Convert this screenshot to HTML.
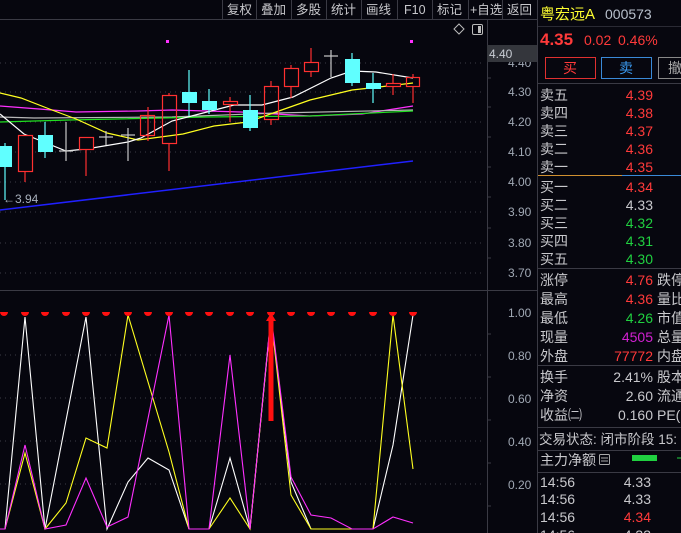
<!DOCTYPE html>
<html><head><meta charset="utf-8"><style>
html,body{margin:0;padding:0;background:#06060e;width:681px;height:533px;overflow:hidden}
svg{display:block}
text{font-family:"Liberation Sans","Noto Sans CJK SC",sans-serif}
</style></head><body>
<svg width="681" height="533" viewBox="0 0 681 533" xmlns="http://www.w3.org/2000/svg">
<rect width="681" height="533" fill="#06060e"/>
<rect x="0" y="0" width="537" height="19" fill="#06060e"/>
<line x1="0" y1="19.5" x2="537" y2="19.5" stroke="#3a3a44"/>
<g stroke="#3a3a44">
<line x1="222.5" y1="0" x2="222.5" y2="19"/><line x1="256.5" y1="0" x2="256.5" y2="19"/><line x1="291.5" y1="0" x2="291.5" y2="19"/><line x1="326.5" y1="0" x2="326.5" y2="19"/><line x1="361.5" y1="0" x2="361.5" y2="19"/><line x1="397.5" y1="0" x2="397.5" y2="19"/><line x1="432.5" y1="0" x2="432.5" y2="19"/><line x1="468.5" y1="0" x2="468.5" y2="19"/><line x1="502.5" y1="0" x2="502.5" y2="19"/>
</g>
<g fill="#c8c8cc" font-size="12.5">
<text x="227" y="14">复权</text><text x="261" y="14">叠加</text><text x="296" y="14">多股</text><text x="331" y="14">统计</text><text x="366" y="14">画线</text><text x="404" y="14">F10</text><text x="437" y="14">标记</text><text x="470" y="14">+自选</text><text x="507" y="14">返回</text>
</g>
<path d="M459 24 L464 29 L459 34 L454 29 Z" fill="none" stroke="#bbb" stroke-width="1"/>
<rect x="472.5" y="24.5" width="10" height="10" rx="1.5" fill="none" stroke="#bbb"/>
<rect x="478" y="26" width="3" height="7" fill="#bbb"/>
<line x1="487.5" y1="20" x2="487.5" y2="533" stroke="#3a3a44"/>
<line x1="0" y1="290.5" x2="537" y2="290.5" stroke="#3a3a44"/>
<line x1="537.5" y1="0" x2="537.5" y2="533" stroke="#3a3a44"/>
<g stroke="#3c3c46" stroke-dasharray="1 4">
<line x1="0" y1="63" x2="485" y2="63"/><line x1="0" y1="92" x2="485" y2="92"/><line x1="0" y1="122" x2="485" y2="122"/><line x1="0" y1="152" x2="485" y2="152"/><line x1="0" y1="182" x2="485" y2="182"/><line x1="0" y1="212" x2="485" y2="212"/><line x1="0" y1="243" x2="485" y2="243"/><line x1="0" y1="273" x2="485" y2="273"/>
<line x1="0" y1="355" x2="485" y2="355"/><line x1="0" y1="398" x2="485" y2="398"/><line x1="0" y1="441" x2="485" y2="441"/><line x1="0" y1="484" x2="485" y2="484"/>
</g>
<g stroke="#3a3a44">
<line x1="487" y1="78" x2="491" y2="78"/><line x1="487" y1="107" x2="491" y2="107"/><line x1="487" y1="137" x2="491" y2="137"/><line x1="487" y1="167" x2="491" y2="167"/><line x1="487" y1="197" x2="491" y2="197"/><line x1="487" y1="228" x2="491" y2="228"/><line x1="487" y1="258" x2="491" y2="258"/>
<line x1="487" y1="334" x2="491" y2="334"/><line x1="487" y1="377" x2="491" y2="377"/><line x1="487" y1="420" x2="491" y2="420"/><line x1="487" y1="463" x2="491" y2="463"/><line x1="487" y1="506" x2="491" y2="506"/>
</g>
<g fill="#a0a8b4" font-size="12">
<text x="508" y="67">4.40</text><text x="508" y="96">4.30</text><text x="508" y="126">4.20</text><text x="508" y="156">4.10</text><text x="508" y="186">4.00</text><text x="508" y="216">3.90</text><text x="508" y="247">3.80</text><text x="508" y="277">3.70</text>
<text x="508" y="317">1.00</text><text x="508" y="360">0.80</text><text x="508" y="403">0.60</text><text x="508" y="446">0.40</text><text x="508" y="489">0.20</text>
</g>
<rect x="487" y="45" width="50" height="17" fill="#34363c"/>
<text x="489" y="58" fill="#c8ccd4" font-size="12">4.40</text>
<polyline fill="none" stroke="#ff30ff" stroke-width="1.2" points="0,106 52,110 76,112 138,111 172,110 241,112 310,116 362,114 413,106"/>
<polyline fill="none" stroke="#b8b8b8" stroke-width="1.2" points="0,117 34,118 172,117 276,113 413,110"/>
<polyline fill="none" stroke="#20e020" stroke-width="1.2" points="0,122 69,120 207,117 310,116 413,111"/>
<polyline fill="none" stroke="#2020ff" stroke-width="1.5" points="0,210 413,161"/>
<polyline fill="none" stroke="#ffff20" stroke-width="1.2" points="0,93 21,98 52,110 76,119 107,133 138,140 183,134 214,126 248,122 276,112 310,100 352,90 379,87 413,83"/>
<polyline fill="none" stroke="#ffffff" stroke-width="1.2" points="0,114 24,134 66,151 86,149 128,142 141,138 172,121 207,112 234,105 262,105 293,97 331,78 352,71 376,72 413,78"/>
<g stroke-width="1.2">
<line x1="5" y1="143" x2="5" y2="200" stroke="#60ffff"/><rect x="0" y="146" width="12" height="21" fill="#60ffff"/>
<line x1="25" y1="171" x2="25" y2="182" stroke="#ff3030"/><rect x="18.5" y="135.5" width="14" height="36" fill="#06060e" stroke="#ff3030"/>
<line x1="45" y1="122" x2="45" y2="158" stroke="#60ffff"/><rect x="38" y="135" width="15" height="17" fill="#60ffff"/>
<line x1="66" y1="122" x2="66" y2="161" stroke="#c8c8c8"/><line x1="59" y1="151" x2="73" y2="151" stroke="#c8c8c8"/>
<line x1="86" y1="149" x2="86" y2="176" stroke="#ff3030"/><rect x="79.5" y="137.5" width="14" height="12" fill="#06060e" stroke="#ff3030"/>
<line x1="106" y1="131" x2="106" y2="145" stroke="#c8c8c8"/><line x1="99" y1="137" x2="113" y2="137" stroke="#c8c8c8"/>
<line x1="128" y1="128" x2="128" y2="161" stroke="#c8c8c8"/><line x1="121" y1="135" x2="135" y2="135" stroke="#c8c8c8"/>
<line x1="148" y1="107" x2="148" y2="141" stroke="#ff3030"/><rect x="140.5" y="115.5" width="14" height="20" fill="none" stroke="#ff3030"/>
<line x1="169" y1="93" x2="169" y2="95" stroke="#ff3030"/><line x1="169" y1="143" x2="169" y2="171" stroke="#ff3030"/><rect x="162.5" y="95.5" width="14" height="48" fill="none" stroke="#ff3030"/>
<line x1="189" y1="70" x2="189" y2="116" stroke="#60ffff"/><rect x="182" y="92" width="15" height="11" fill="#60ffff"/>
<line x1="209" y1="89" x2="209" y2="114" stroke="#60ffff"/><rect x="202" y="101" width="15" height="9" fill="#60ffff"/>
<line x1="230" y1="97" x2="230" y2="122" stroke="#ff3030"/><rect x="223.5" y="101.5" width="14" height="3" fill="#06060e" stroke="#ff3030"/>
<line x1="250" y1="95" x2="250" y2="131" stroke="#60ffff"/><rect x="243" y="110" width="15" height="18" fill="#60ffff"/>
<line x1="271" y1="81" x2="271" y2="86" stroke="#ff3030"/><line x1="271" y1="119" x2="271" y2="125" stroke="#ff3030"/><rect x="264.5" y="86.5" width="14" height="33" fill="none" stroke="#ff3030"/>
<line x1="291" y1="65" x2="291" y2="68" stroke="#ff3030"/><line x1="291" y1="86" x2="291" y2="98" stroke="#ff3030"/><rect x="284.5" y="68.5" width="14" height="18" fill="#06060e" stroke="#ff3030"/>
<line x1="311" y1="48" x2="311" y2="62" stroke="#ff3030"/><line x1="311" y1="71" x2="311" y2="77" stroke="#ff3030"/><rect x="304.5" y="62.5" width="14" height="9" fill="#06060e" stroke="#ff3030"/>
<line x1="331" y1="50" x2="331" y2="77" stroke="#c8c8c8"/><line x1="324" y1="56" x2="338" y2="56" stroke="#c8c8c8"/>
<line x1="352" y1="53" x2="352" y2="86" stroke="#60ffff"/><rect x="345" y="59" width="15" height="24" fill="#60ffff"/>
<line x1="373" y1="73" x2="373" y2="103" stroke="#60ffff"/><rect x="366" y="83" width="15" height="6" fill="#60ffff"/>
<line x1="393" y1="74" x2="393" y2="83" stroke="#ff3030"/><line x1="393" y1="86" x2="393" y2="95" stroke="#ff3030"/><rect x="386.5" y="83.5" width="14" height="3" fill="#06060e" stroke="#ff3030"/>
<line x1="413" y1="74" x2="413" y2="77" stroke="#ff3030"/><line x1="413" y1="86" x2="413" y2="103" stroke="#ff3030"/><rect x="406.5" y="77.5" width="13" height="9" fill="none" stroke="#ff3030"/>
</g>
<rect x="166" y="40" width="3" height="3" fill="#ff30ff"/><rect x="410" y="40" width="3" height="3" fill="#ff30ff"/>
<text x="3" y="203" fill="#a8b0bc" font-size="12">←3.94</text>
<polyline fill="none" stroke="#ffffff" stroke-width="1.1" points="0,529 5,529 25,317 45,529 86,317 107,529 128,482 148,458 169,470 189,529 209,529 230,458 250,529 271,317 291,482 311,529 373,529 393,445 413,315"/>
<polyline fill="none" stroke="#ffff20" stroke-width="1.1" points="0,529 5,529 25,453 45,529 66,503 86,438 107,448 128,315 169,452 189,529 209,529 230,498 250,529 271,317 291,495 311,529 373,529 393,315 413,469"/>
<polyline fill="none" stroke="#ff30ff" stroke-width="1.1" points="0,529 5,529 25,445 45,529 66,525 86,478 107,527 128,517 169,315 189,529 209,529 230,355 250,529 271,315 291,477 311,515 331,518 352,529 373,529 393,517 413,523"/>
<g fill="#ff1010">
<path d="M0 312 h8 a4 4 0 0 1 -8 0Z"/>
<path d="M21 312 h8 a4 4 0 0 1 -8 0Z"/><path d="M41 312 h8 a4 4 0 0 1 -8 0Z"/><path d="M62 312 h8 a4 4 0 0 1 -8 0Z"/><path d="M82 312 h8 a4 4 0 0 1 -8 0Z"/><path d="M102 312 h8 a4 4 0 0 1 -8 0Z"/><path d="M124 312 h8 a4 4 0 0 1 -8 0Z"/><path d="M144 312 h8 a4 4 0 0 1 -8 0Z"/><path d="M165 312 h8 a4 4 0 0 1 -8 0Z"/><path d="M185 312 h8 a4 4 0 0 1 -8 0Z"/><path d="M205 312 h8 a4 4 0 0 1 -8 0Z"/><path d="M226 312 h8 a4 4 0 0 1 -8 0Z"/><path d="M246 312 h8 a4 4 0 0 1 -8 0Z"/><path d="M267 312 h8 a4 4 0 0 1 -8 0Z"/><path d="M287 312 h8 a4 4 0 0 1 -8 0Z"/><path d="M307 312 h8 a4 4 0 0 1 -8 0Z"/><path d="M327 312 h8 a4 4 0 0 1 -8 0Z"/><path d="M348 312 h8 a4 4 0 0 1 -8 0Z"/><path d="M369 312 h8 a4 4 0 0 1 -8 0Z"/><path d="M389 312 h8 a4 4 0 0 1 -8 0Z"/><path d="M409 312 h8 a4 4 0 0 1 -8 0Z"/>
<rect x="268.5" y="319" width="5" height="102"/>
<path d="M266 321 L271 313 L276 321 Z"/>
</g>
<rect x="538" y="0" width="143" height="533" fill="#07070f"/>
<text x="540" y="19" fill="#ffff30" font-size="15">粤宏远A</text>
<text x="605" y="19" fill="#b8c0cc" font-size="14">000573</text>
<line x1="538" y1="26.5" x2="681" y2="26.5" stroke="#2a2a34"/>
<text x="540" y="45" fill="#ff3a3a" font-size="17" font-weight="bold">4.35</text>
<text x="584" y="45" fill="#ff3a3a" font-size="14">0.02</text>
<text x="618" y="45" fill="#ff3a3a" font-size="14">0.46%</text>
<rect x="545.5" y="57.5" width="50" height="21" fill="none" stroke="#e03030"/>
<text x="563" y="73" fill="#ff3a3a" font-size="14">买</text>
<rect x="601.5" y="57.5" width="50" height="21" fill="none" stroke="#3a8ad8"/>
<text x="619" y="73" fill="#3a9af0" font-size="14">卖</text>
<rect x="658.5" y="57.5" width="30" height="21" fill="none" stroke="#888"/>
<text x="668" y="73" fill="#aaa" font-size="14">撤</text>
<line x1="538" y1="83.5" x2="681" y2="83.5" stroke="#3a3a44"/>
<g font-size="14" fill="#c8c8cc">
<text x="540" y="100">卖五</text><text x="540" y="118">卖四</text><text x="540" y="136">卖三</text><text x="540" y="154">卖二</text><text x="540" y="172">卖一</text>
<text x="540" y="192">买一</text><text x="540" y="210">买二</text><text x="540" y="228">买三</text><text x="540" y="246">买四</text><text x="540" y="264">买五</text>
</g>
<g font-size="14" text-anchor="end">
<text x="653" y="100" fill="#ff3a3a">4.39</text><text x="653" y="118" fill="#ff3a3a">4.38</text><text x="653" y="136" fill="#ff3a3a">4.37</text><text x="653" y="154" fill="#ff3a3a">4.36</text><text x="653" y="172" fill="#ff3a3a">4.35</text>
<text x="653" y="192" fill="#ff3a3a">4.34</text><text x="653" y="210" fill="#c8c8cc">4.33</text><text x="653" y="228" fill="#20d040">4.32</text><text x="653" y="246" fill="#20d040">4.31</text><text x="653" y="264" fill="#20d040">4.30</text>
</g>
<line x1="538" y1="175.5" x2="622" y2="175.5" stroke="#d09030"/>
<line x1="622" y1="175.5" x2="681" y2="175.5" stroke="#3a8ad8"/>
<line x1="538" y1="268.5" x2="681" y2="268.5" stroke="#3a3a44"/>
<g font-size="14" fill="#c8c8cc">
<text x="540" y="285">涨停</text><text x="540" y="304">最高</text><text x="540" y="323">最低</text><text x="540" y="342">现量</text><text x="540" y="361">外盘</text>
<text x="657" y="285">跌停</text><text x="657" y="304">量比</text><text x="657" y="323">市值</text><text x="657" y="342">总量</text><text x="657" y="361">内盘</text>
</g>
<g font-size="14" text-anchor="end">
<text x="653" y="285" fill="#ff3a3a">4.76</text><text x="653" y="304" fill="#ff3a3a">4.36</text><text x="653" y="323" fill="#20d040">4.26</text><text x="653" y="342" fill="#d020d0">4505</text><text x="653" y="361" fill="#ff3a3a">77772</text>
</g>
<line x1="538" y1="365.5" x2="681" y2="365.5" stroke="#3a3a44"/>
<g font-size="14" fill="#c8c8cc">
<text x="540" y="382">换手</text><text x="540" y="401">净资</text><text x="540" y="420">收益㈡</text>
<text x="657" y="382">股本</text><text x="657" y="401">流通</text><text x="657" y="420">PE(</text>
</g>
<g font-size="14" text-anchor="end" fill="#c8c8cc">
<text x="653" y="382">2.41%</text><text x="653" y="401">2.60</text><text x="653" y="420">0.160</text>
</g>
<line x1="538" y1="427.5" x2="681" y2="427.5" stroke="#3a3a44"/>
<text x="539" y="444" font-size="13.5" fill="#c8c8cc">交易状态: 闭市阶段 15:</text>
<line x1="538" y1="450.5" x2="681" y2="450.5" stroke="#3a3a44"/>
<text x="540" y="465" font-size="14" fill="#c8c8cc">主力净额</text>
<rect x="599.5" y="454.5" width="10" height="10" rx="1" fill="none" stroke="#aaa"/>
<line x1="601" y1="458" x2="608" y2="458" stroke="#aaa"/><line x1="601" y1="461" x2="608" y2="461" stroke="#aaa"/>
<rect x="632" y="455" width="25" height="6" fill="#20d040"/>
<line x1="677" y1="458" x2="681" y2="458" stroke="#20d040"/>
<line x1="538" y1="472.5" x2="681" y2="472.5" stroke="#3a3a44"/>
<g font-size="14" fill="#c8c8cc">
<text x="540" y="487">14:56</text><text x="540" y="504">14:56</text><text x="540" y="522">14:56</text><text x="540" y="540">14:56</text>
</g>
<g font-size="14" text-anchor="end">
<text x="651" y="487" fill="#c8c8cc">4.33</text><text x="651" y="504" fill="#c8c8cc">4.33</text><text x="651" y="522" fill="#ff3a3a">4.34</text><text x="651" y="540" fill="#c8c8cc">4.33</text>
</g>
</svg>
</body></html>
